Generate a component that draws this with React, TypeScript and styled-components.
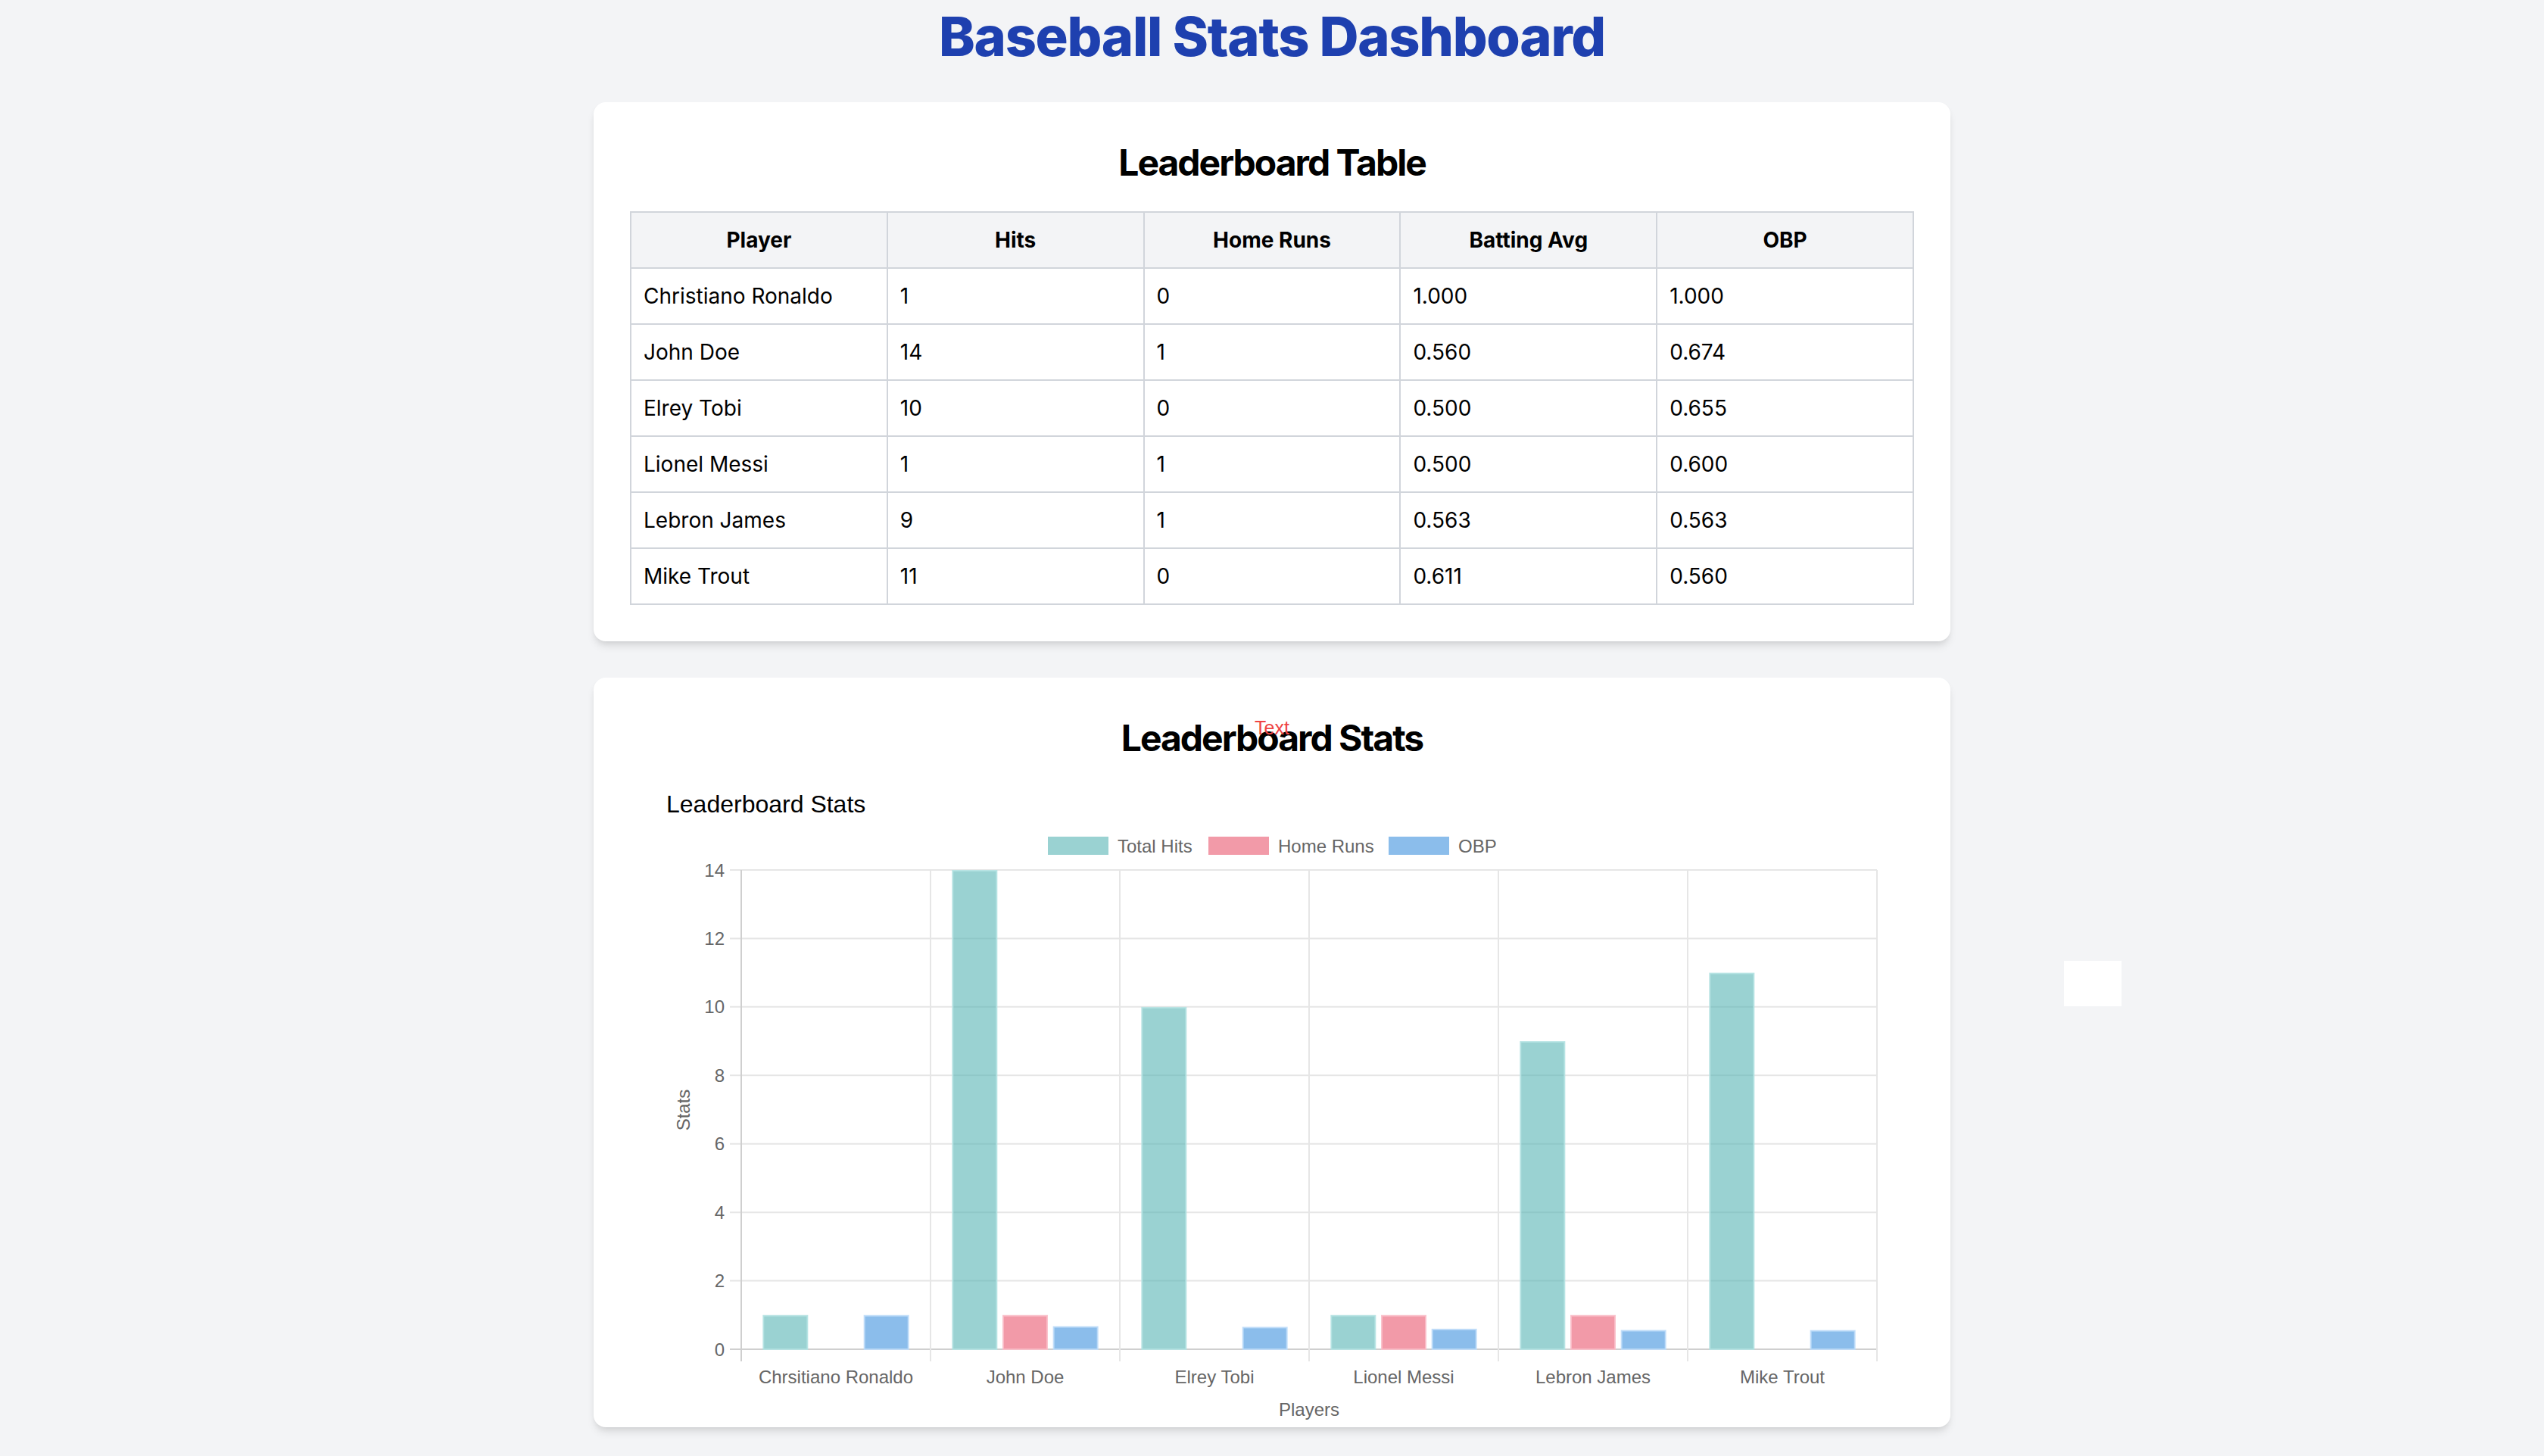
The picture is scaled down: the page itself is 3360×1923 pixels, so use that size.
import React from "react"
import styled, { createGlobalStyle } from "styled-components"

const GlobalStyle = createGlobalStyle`
  html, body {
    margin: 0;
    padding: 0;
    background: #f3f4f6;
    font-family: Inter, "Noto Sans", "DejaVu Sans", sans-serif;
    color: #000;
  }
`

const Page = styled.main`
  position: relative;
  min-height: 1923px;
  padding-top: 8px;
  display: flex;
  flex-direction: column;
  align-items: center;
  box-sizing: border-box;
`

const Title = styled.h1`
  margin: 0 0 47px;
  font-size: 72px;
  line-height: 80px;
  font-weight: 800;
  color: #1e40af;
  letter-spacing: -1.3px;
`

const Card = styled.section<{ $tight?: boolean }>`
  position: relative;
  width: 1792px;
  box-sizing: border-box;
  padding: ${(p) => (p.$tight ? "48px 48px 8px" : "48px")};
  margin-bottom: 48px;
  background: #fff;
  border-radius: 16px;
  box-shadow: 0 8px 12px -2px rgba(0, 0, 0, 0.1), 0 4px 8px -4px rgba(0, 0, 0, 0.1);
`

const CardTitle = styled.h2`
  margin: 0 0 32px;
  font-size: 48px;
  line-height: 64px;
  font-weight: 700;
  text-align: center;
  letter-spacing: -2px;
`

const Table = styled.table`
  width: 100%;
  table-layout: fixed;
  border-collapse: collapse;
  font-size: 28px;
  line-height: 40px;
`

const Th = styled.th`
  padding: 16px;
  border: 2px solid #d1d5db;
  background: #f3f4f6;
  font-weight: 700;
  text-align: center;
`

const Td = styled.td`
  padding: 16px;
  border: 2px solid #d1d5db;
  text-align: left;
`

const Marker = styled.span`
  position: absolute;
  left: 0;
  right: 0;
  top: 54px;
  text-align: center;
  font-family: "Liberation Sans", Arial, sans-serif;
  font-size: 25px;
  line-height: 25px;
  color: #ef4444;
`

const ChartSvg = styled.svg`
  display: block;
  font-family: "Liberation Sans", Arial, sans-serif;
`

const Blank = styled.div`
  position: absolute;
  left: 2726px;
  top: 1269px;
  width: 76px;
  height: 60px;
  background: #fff;
`

type Player = { name: string; chartName: string; hits: number; hr: number; avg: string; obp: string }

const players: Player[] = [
  { name: "Christiano Ronaldo", chartName: "Chrsitiano Ronaldo", hits: 1, hr: 0, avg: "1.000", obp: "1.000" },
  { name: "John Doe", chartName: "John Doe", hits: 14, hr: 1, avg: "0.560", obp: "0.674" },
  { name: "Elrey Tobi", chartName: "Elrey Tobi", hits: 10, hr: 0, avg: "0.500", obp: "0.655" },
  { name: "Lionel Messi", chartName: "Lionel Messi", hits: 1, hr: 1, avg: "0.500", obp: "0.600" },
  { name: "Lebron James", chartName: "Lebron James", hits: 9, hr: 1, avg: "0.563", obp: "0.563" },
  { name: "Mike Trout", chartName: "Mike Trout", hits: 11, hr: 0, avg: "0.611", obp: "0.560" },
]

const series = [
  { label: "Total Hits", fill: "rgba(87,180,180,0.6)", edge: "rgba(180,226,226,0.9)", box: 552, text: 644 },
  { label: "Home Runs", fill: "rgba(233,87,110,0.6)", edge: "rgba(250,190,200,0.9)", box: 764, text: 856 },
  { label: "OBP", fill: "rgba(62,145,222,0.6)", edge: "rgba(190,220,248,0.9)", box: 1002, text: 1094 },
]

// plot geometry (svg coords)
const X0 = 147
const CAT = 250
const YTOP = 113
const Y0 = 746
const UNIT = (Y0 - YTOP) / 14

const Chart: React.FC = () => {
  const ticks = [0, 2, 4, 6, 8, 10, 12, 14]
  return (
    <ChartSvg width={1696} height={838} viewBox="0 3 1696 838">
      <text x={48} y={37} fontSize={32} fill="#000">Leaderboard Stats</text>

      {series.map((s) => (
        <g key={s.label}>
          <rect x={s.box} y={69} width={80} height={24} fill={s.fill} />
          <text x={s.text} y={89.5} fontSize={24} fill="#666">{s.label}</text>
        </g>
      ))}

      {ticks.map((t) => {
        const y = Y0 - t * UNIT
        return (
          <g key={t}>
            <line x1={132} x2={X0 + CAT * 6} y1={y} y2={y} stroke={t === 0 ? "#cfcfcf" : "#e6e6e6"} strokeWidth={2} />
            <text x={125} y={y + 8.6} fontSize={24} fill="#666" textAnchor="end">{t}</text>
          </g>
        )
      })}

      {[0, 1, 2, 3, 4, 5, 6].map((i) => (
        <line key={i} x1={X0 + i * CAT} x2={X0 + i * CAT} y1={YTOP} y2={Y0 + 16}
          stroke={i === 0 ? "#cfcfcf" : "#e6e6e6"} strokeWidth={2} />
      ))}

      {players.map((p, i) => {
        const values = [p.hits, p.hr, parseFloat(p.obp)]
        return (
          <g key={p.name}>
            {values.map((v, j) => {
              if (v === 0) return null
              const h = v * UNIT
              const x = X0 + i * CAT + 28.33 + j * 66.67
              return (
                <rect key={j} x={x + 1} y={Y0 - h + 1} width={58} height={h - 1}
                  fill={series[j].fill} stroke={series[j].edge} strokeWidth={2} />
              )
            })}
            <text x={X0 + i * CAT + CAT / 2} y={791} fontSize={24} fill="#666" textAnchor="middle">{p.chartName}</text>
          </g>
        )
      })}

      <text x={78.6} y={430} fontSize={24} fill="#666" textAnchor="middle" transform="rotate(-90 78.6 430)">Stats</text>
      <text x={X0 + CAT * 3} y={834} fontSize={24} fill="#666" textAnchor="middle">Players</text>
    </ChartSvg>
  )
}

const App: React.FC = () => {
  return (
    <Page>
      <GlobalStyle />
      <Title>Baseball Stats Dashboard</Title>

      <Card>
        <CardTitle>Leaderboard Table</CardTitle>
        <Table>
          <thead>
            <tr>
              <Th>Player</Th>
              <Th>Hits</Th>
              <Th>Home Runs</Th>
              <Th>Batting Avg</Th>
              <Th>OBP</Th>
            </tr>
          </thead>
          <tbody>
            {players.map((p) => (
              <tr key={p.name}>
                <Td>{p.name}</Td>
                <Td>{p.hits}</Td>
                <Td>{p.hr}</Td>
                <Td>{p.avg}</Td>
                <Td>{p.obp}</Td>
              </tr>
            ))}
          </tbody>
        </Table>
      </Card>

      <Card $tight>
        <Marker>Text</Marker>
        <CardTitle>Leaderboard Stats</CardTitle>
        <Chart />
      </Card>

      <Blank />
    </Page>
  )
}

export default App
